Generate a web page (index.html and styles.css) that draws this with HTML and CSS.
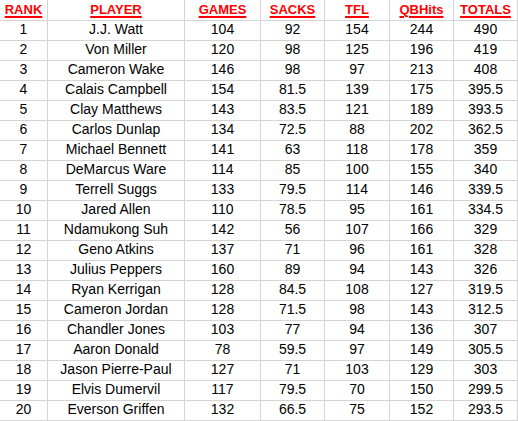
FILE: index.html
```html
<!DOCTYPE html>
<html>
<head>
<meta charset="utf-8">
<link rel="stylesheet" href="styles.css">
</head>
<body>
<div class="sheet">
  <div class="c h">RANK</div><div class="c h">PLAYER</div><div class="c h">GAMES</div><div class="c h">SACKS</div><div class="c h">TFL</div><div class="c h">QBHits</div><div class="c h">TOTALS</div>
  <div class="c">1</div><div class="c">J.J. Watt</div><div class="c">104</div><div class="c">92</div><div class="c">154</div><div class="c">244</div><div class="c">490</div>
  <div class="c">2</div><div class="c">Von Miller</div><div class="c">120</div><div class="c">98</div><div class="c">125</div><div class="c">196</div><div class="c">419</div>
  <div class="c">3</div><div class="c">Cameron Wake</div><div class="c">146</div><div class="c">98</div><div class="c">97</div><div class="c">213</div><div class="c">408</div>
  <div class="c">4</div><div class="c">Calais Campbell</div><div class="c">154</div><div class="c">81.5</div><div class="c">139</div><div class="c">175</div><div class="c">395.5</div>
  <div class="c">5</div><div class="c">Clay Matthews</div><div class="c">143</div><div class="c">83.5</div><div class="c">121</div><div class="c">189</div><div class="c">393.5</div>
  <div class="c">6</div><div class="c">Carlos Dunlap</div><div class="c">134</div><div class="c">72.5</div><div class="c">88</div><div class="c">202</div><div class="c">362.5</div>
  <div class="c">7</div><div class="c">Michael Bennett</div><div class="c">141</div><div class="c">63</div><div class="c">118</div><div class="c">178</div><div class="c">359</div>
  <div class="c">8</div><div class="c">DeMarcus Ware</div><div class="c">114</div><div class="c">85</div><div class="c">100</div><div class="c">155</div><div class="c">340</div>
  <div class="c">9</div><div class="c">Terrell Suggs</div><div class="c">133</div><div class="c">79.5</div><div class="c">114</div><div class="c">146</div><div class="c">339.5</div>
  <div class="c">10</div><div class="c">Jared Allen</div><div class="c">110</div><div class="c">78.5</div><div class="c">95</div><div class="c">161</div><div class="c">334.5</div>
  <div class="c">11</div><div class="c">Ndamukong Suh</div><div class="c">142</div><div class="c">56</div><div class="c">107</div><div class="c">166</div><div class="c">329</div>
  <div class="c">12</div><div class="c">Geno Atkins</div><div class="c">137</div><div class="c">71</div><div class="c">96</div><div class="c">161</div><div class="c">328</div>
  <div class="c">13</div><div class="c">Julius Peppers</div><div class="c">160</div><div class="c">89</div><div class="c">94</div><div class="c">143</div><div class="c">326</div>
  <div class="c">14</div><div class="c">Ryan Kerrigan</div><div class="c">128</div><div class="c">84.5</div><div class="c">108</div><div class="c">127</div><div class="c">319.5</div>
  <div class="c">15</div><div class="c">Cameron Jordan</div><div class="c">128</div><div class="c">71.5</div><div class="c">98</div><div class="c">143</div><div class="c">312.5</div>
  <div class="c">16</div><div class="c">Chandler Jones</div><div class="c">103</div><div class="c">77</div><div class="c">94</div><div class="c">136</div><div class="c">307</div>
  <div class="c">17</div><div class="c">Aaron Donald</div><div class="c">78</div><div class="c">59.5</div><div class="c">97</div><div class="c">149</div><div class="c">305.5</div>
  <div class="c">18</div><div class="c">Jason Pierre-Paul</div><div class="c">127</div><div class="c">71</div><div class="c">103</div><div class="c">129</div><div class="c">303</div>
  <div class="c">19</div><div class="c">Elvis Dumervil</div><div class="c">117</div><div class="c">79.5</div><div class="c">70</div><div class="c">150</div><div class="c">299.5</div>
  <div class="c">20</div><div class="c">Everson Griffen</div><div class="c">132</div><div class="c">66.5</div><div class="c">75</div><div class="c">152</div><div class="c">293.5</div>
</div>
</body>
</html>
```
FILE: styles.css
```css
html, body {
  margin: 0;
  padding: 0;
  background: #ffffff;
}
.sheet {
  display: grid;
  grid-template-columns: 48px 137px 76px 64px 65px 64px 64px;
  grid-template-rows: 21px repeat(20, 20px);
  width: 518px;
  font-family: "Liberation Sans", Arial, sans-serif;
  font-size: 14px;
  color: #000000;
}
.c {
  box-sizing: border-box;
  border-right: 1px solid #d4d4d4;
  border-bottom: 1px solid #d4d4d4;
  display: flex;
  align-items: flex-end;
  justify-content: center;
  padding-bottom: 3px;
  line-height: 15px;
  white-space: nowrap;
}
.h {
  color: #ff0000;
  font-size: 13px;
  font-weight: bold;
  text-decoration: underline;
  text-decoration-thickness: 2px;
  text-underline-offset: 2px;
}
```
